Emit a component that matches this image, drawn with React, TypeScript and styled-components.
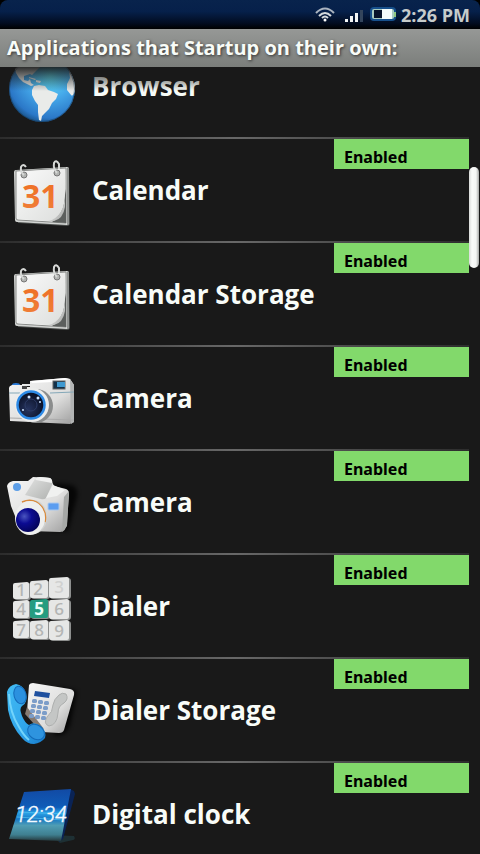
import React from "react";
import styled, { createGlobalStyle } from "styled-components";

const GlobalStyle = createGlobalStyle`
  * { box-sizing: border-box; }
  body { margin: 0; background: #000; }
`;

const sans = `"Open Sans", "Noto Sans", sans-serif`;

const Screen = styled.div`
  display: flex;
  flex-direction: column;
  height: 100vh;
  overflow: hidden;
  background: #191919;
  color: #f8fcf8;
  font-family: ${sans};
  font-weight: 700;
`;

const StatusWrap = styled.div`
  flex: none;
  background: #000;
`;

const StatusBar = styled.div`
  display: flex;
  align-items: center;
  justify-content: flex-end;
  height: 29px;
  padding-right: 10px;
  border-radius: 8px 8px 0 0;
  background: linear-gradient(#08234c 0%, #06204a 40%, #020c20 80%, #000 100%);
`;

const StatusIcons = styled.svg`
  width: 84px;
  height: 29px;
  margin-right: 4px;
`;

const Clock = styled.time`
  font-size: 18px;
  line-height: 28px;
  color: #c6cbcb;
  white-space: nowrap;
`;

const TitleBar = styled.h1`
  flex: none;
  margin: 0;
  height: 38px;
  padding-left: 7px;
  font-size: 20px;
  line-height: 38px;
  white-space: nowrap;
  background: linear-gradient(#969896, #7b7e7b);
  text-shadow: 1px 1px 3px #333;
`;

const Viewport = styled.main`
  position: relative;
  display: flex;
  flex: 1;
  min-height: 0;
  overflow: hidden;
`;

const TopFade = styled.div`
  position: absolute;
  inset: 0 0 auto 0;
  height: 24px;
  background: linear-gradient(rgba(25, 25, 25, 0.9), rgba(25, 25, 25, 0));
`;

const List = styled.ul`
  flex: 1;
  margin: -32px 0 0;
  padding: 0;
  list-style: none;
`;

const Row = styled.li`
  display: grid;
  grid-template-columns: 92px 1fr 135px;
  align-items: center;
  height: 104px;
  border-bottom: 2px solid;
  border-image: linear-gradient(90deg, #2c2c2c, #686868 50%, #2c2c2c) 1;
`;

const Icon = styled.svg`
  width: 88px;
  height: 102px;
`;

const Name = styled.span`
  font-size: 26px;
  line-height: 36px;
  white-space: nowrap;
`;

const Badge = styled.span`
  align-self: start;
  height: 30px;
  padding: 6px 0 0 10px;
  font-family: "Noto Sans", sans-serif;
  font-size: 16px;
  line-height: 24px;
  color: #000;
  background: #82d96b;
`;

const Gutter = styled.div`
  flex: none;
  width: 11px;
  padding-top: 100px;
`;

const Thumb = styled.div`
  width: 10px;
  height: 101px;
  border-radius: 5px;
  background: linear-gradient(90deg, #d8dad8, #fafcfa 30%, #f4f6f4 70%, #a8aaa8);
`;

const Gradients = () => (
  <defs>
    <linearGradient id="metal" x1="0" y1="0" x2="1" y2="1">
      <stop offset="0" stopColor="#f6f6f6" />
      <stop offset="0.6" stopColor="#dededd" />
      <stop offset="1" stopColor="#9d9d9d" />
    </linearGradient>
    <radialGradient id="ocean" cx="0.62" cy="0.3" r="0.75">
      <stop offset="0" stopColor="#62e2f6" />
      <stop offset="0.45" stopColor="#45a9ea" />
      <stop offset="0.85" stopColor="#2b78c8" />
      <stop offset="1" stopColor="#174e80" />
    </radialGradient>
    <linearGradient id="paper" x1="0" y1="0" x2="1" y2="1">
      <stop offset="0" stopColor="#fafafa" />
      <stop offset="1" stopColor="#dcdedc" />
    </linearGradient>
    <linearGradient id="curl" x1="0" y1="0" x2="1" y2="1">
      <stop offset="0" stopColor="#f4f5f4" />
      <stop offset="1" stopColor="#a8aaa8" />
    </linearGradient>
    <linearGradient id="orange" x1="0" y1="0" x2="0" y2="1">
      <stop offset="0" stopColor="#ee6c20" />
      <stop offset="1" stopColor="#f0813c" />
    </linearGradient>
    <radialGradient id="lens" cx="0.4" cy="0.65" r="0.65">
      <stop offset="0" stopColor="#26345f" />
      <stop offset="1" stopColor="#070d20" />
    </radialGradient>
    <radialGradient id="lensBlue" cx="0.35" cy="0.35" r="0.75">
      <stop offset="0" stopColor="#4a55c0" />
      <stop offset="0.4" stopColor="#0b0b92" />
      <stop offset="1" stopColor="#020250" />
    </radialGradient>
    <linearGradient id="prism" x1="0" y1="0" x2="1" y2="1">
      <stop offset="0" stopColor="#e4e5e4" />
      <stop offset="1" stopColor="#b0b2b0" />
    </linearGradient>
    <linearGradient id="handset" x1="0" y1="0" x2="1" y2="1">
      <stop offset="0" stopColor="#43bcf4" />
      <stop offset="0.6" stopColor="#2fa4ea" />
      <stop offset="1" stopColor="#1678c8" />
    </linearGradient>
    <linearGradient id="sea" x1="0" y1="0" x2="0" y2="1">
      <stop offset="0" stopColor="#124aa4" />
      <stop offset="0.35" stopColor="#0f5cb8" />
      <stop offset="0.46" stopColor="#2aa2e6" />
      <stop offset="0.58" stopColor="#1878c4" />
      <stop offset="0.7" stopColor="#4f9db4" />
      <stop offset="0.88" stopColor="#3f7f90" />
      <stop offset="1" stopColor="#25383c" />
    </linearGradient>
    <filter id="soft" x="-30%" y="-30%" width="160%" height="160%">
      <feGaussianBlur stdDeviation="2" />
    </filter>
  </defs>
);

const Globe = () => (
  <>
    <circle cx="42" cy="54" r="33" fill="url(#ocean)" />
    <g fill="#e9ebe9">
      <path d="M15 34 L24 26 L42 22 L50 27 L41 31 L37 35 L32 40 L30 39 L27 40 L24 41 L24 45 L28 46 L30 44 L31 48 L34 50 L31 51 L27 49 L23 47 L19 43 L16 38Z" />
      <path d="M29 42 L36 44 L35 45 L29 43Z M36 45 L41 46 L40 48 L36 47Z" />
      <path d="M34 51 L39 50 L45 51 L48 55 L54 57 L58 59 L56 64 L52 68 L49 74 L45 78 L42 81 L41 86 L39 85 L38 77 L38 70 L35 66 L32 60 L32 55Z" />
      <path d="M69 35 Q76 46 75 56 Q73 62 71 60 L67 55 L67 49 L70 43Z" />
    </g>
    <circle cx="42" cy="54" r="32.5" fill="none" stroke="#14334f" opacity="0.5" />
  </>
);

const Calendar = () => (
  <>
    <path d="M18 32 L69 29 L70 84 Q70 87 67 87 L18 84Z" fill="#4c4f4d" />
    <path d="M16 31 L67 28 Q69 28 69 30 L69 84 Q69 86 67 86 L17 83 Q15 83 15 81 L14 33 Q14 31 16 31Z" fill="#d3d5d3" />
    <path d="M67 29 Q69 28 69 30 L69 84 Q69 86 67 86Z" fill="#8d908e" />
    <path d="M16 32 L66 29 L66 84 L18 81 Q16 81 16 79Z" fill="#f0f1f0" stroke="#898b89" />
    <path d="M66 50 L66 84 L52 83 Q62 78 66 50Z" fill="#5c5f5d" />
    <path d="M17 33 L65 30 Q66 60 63 69 Q59 80 48 82 L18 80Z" fill="url(#paper)" />
    <path d="M65 54 Q65 78 48 82 L54 82 Q63 80 65 68Z" fill="url(#curl)" />
    <g fill="#b2b4b2" stroke="#777" strokeWidth="1">
      <circle cx="24" cy="36" r="3" />
      <circle cx="57" cy="34" r="3" />
    </g>
    <path d="M24 36 Q20 33 21 28 Q23 24 26 28 M57 34 Q53 30 54 24 Q56 20 59 25 L59 30" fill="none" stroke="#d6d8d6" strokeWidth="2" />
    <text x="22" y="69" fill="url(#orange)" fontFamily="Noto Sans, sans-serif" fontWeight="700" fontSize="32">
      31
    </text>
  </>
);

const Camera = () => (
  <>
    <ellipse cx="16" cy="38" rx="4" ry="2" fill="#2b7bd8" />
    <path d="M9 41 Q9 39 12 38 L22 38 L22 40 L30 40 L30 34 L65 31 L70 32 L74 38 L74 75 L70 77 L10 74Z" fill="url(#metal)" />
    <path d="M70 32 L74 38 L74 75 L71 77Z" fill="#b2b4b4" />
    <path d="M31 34 L65 31 L70 32 L53 35 L32 36Z" fill="#fff" />
    <path d="M22 39 L27 39 L27 42 L22 42Z" fill="#444" />
    <path d="M22 37 H30 V39 H22Z" fill="#e8e9e8" />
    <path d="M9 46 H20 M50 46 L74 45" stroke="#84a8b8" strokeWidth="1" />
    <path d="M10 71 L74 73" stroke="#aaa" />
    <rect x="53" y="34" width="12" height="8" fill="#143149" stroke="#666" />
    <path d="M57 35 H65 V40 H57Z" fill="#3f99d0" />
    <ellipse cx="36" cy="59" rx="17" ry="17" fill="#8b8d8d" />
    <circle cx="32" cy="58" r="17" fill="#ecedec" />
    <circle cx="31" cy="58" r="13.5" fill="url(#lens)" stroke="#2d8ae6" strokeWidth="2.5" />
    <circle cx="31" cy="58" r="6" fill="none" stroke="#2d3c66" />
    <g fill="#cfe4ff">
      <circle cx="29" cy="50" r="1.5" />
      <circle cx="38" cy="51" r="1.5" />
      <circle cx="23" cy="63" r="1" />
      <circle cx="40" cy="55" r="1" />
    </g>
  </>
);

const CompactCamera = () => (
  <>
    <path d="M54 32 L72 34 Q80 38 76 50 L68 80 L50 80Z" fill="#000" opacity="0.75" filter="url(#soft)" />
    <path d="M7 35 Q8 31 13 30 L28 30 L33 26 L50 27 L54 35 L66 38 Q69 39 69 43 L67 72 Q66 81 60 81 L30 80 L17 70 L11 55Z" fill="url(#metal)" />
    <path d="M64 46 L69 40 L67 75 L62 81Z" fill="#a6a8a6" />
    <path d="M25 44 L35 28 Q37 26 40 26 L50 27 Q53 29 52 34 L46 47 Q44 49 41 48Z" fill="url(#prism)" />
    <path d="M35 28 Q37 26 40 26 L50 27 Q53 29 52 32 L36 29Z" fill="#f0f1f0" />
    <path d="M46 47 L53 34 L65 39 L57 45Z" fill="#f0f1f0" />
    <circle cx="17" cy="36" r="4" fill="#5c9ee8" />
    <rect x="48" y="52" width="11" height="7" rx="1" fill="#5b9df0" stroke="#aac8ee" />
    <ellipse cx="33" cy="66" rx="14" ry="17" fill="#d0d2d0" />
    <path d="M22 51 Q34 46 42 56 Q47 63 45 71" fill="none" stroke="#d98a3c" strokeWidth="1.5" />
    <ellipse cx="30" cy="67" rx="15" ry="17" fill="#eeefee" />
    <ellipse cx="28" cy="69" rx="12" ry="12" fill="url(#lensBlue)" />
  </>
);

const keys = [
  { x: 13, y: 27, w: 16, h: 17, d: "1", tx: 21, ty: 41 },
  { x: 30, y: 25, w: 18, h: 18, d: "2", tx: 38, ty: 40 },
  { x: 49, y: 22, w: 20, h: 21, d: "3", tx: 59, ty: 38 },
  { x: 13, y: 45, w: 16, h: 18, d: "4", tx: 21, ty: 60 },
  { x: 30, y: 44, w: 18, h: 19, d: "5", tx: 39, ty: 60 },
  { x: 49, y: 44, w: 20, h: 20, d: "6", tx: 59, ty: 60 },
  { x: 13, y: 65, w: 16, h: 18, d: "7", tx: 21, ty: 81 },
  { x: 30, y: 65, w: 18, h: 19, d: "8", tx: 39, ty: 81 },
  { x: 49, y: 65, w: 20, h: 20, d: "9", tx: 59, ty: 82 },
];

const Dialer = () => (
  <g fontFamily="Noto Sans, sans-serif" fontSize="17" textAnchor="middle">
    {keys.map((k) => (
      <g key={k.d}>
        <rect x={k.x + 1} y={k.y + 1} width={k.w + 1} height={k.h} rx="3" fill="#8d8f8e" />
        <path
          d={`M${k.x + 2} ${k.y + 1} L${k.x + k.w - 2} ${k.y} Q${k.x + k.w} ${k.y} ${k.x + k.w} ${k.y + 2} V${k.y + k.h - 2} Q${k.x + k.w} ${k.y + k.h} ${k.x + k.w - 2} ${k.y + k.h} H${k.x + 2} Q${k.x} ${k.y + k.h} ${k.x} ${k.y + k.h - 2} V${k.y + 3} Q${k.x} ${k.y + 1} ${k.x + 2} ${k.y + 1}Z`}
          fill={k.d === "5" ? "#259c80" : "#e6e7e6"}
        />
        <text
          x={k.tx}
          y={k.ty}
          fontWeight={k.d === "5" ? 700 : 500}
          fill={k.d === "5" ? "#e8fff8" : k.d === "3" ? "#d0d1d0" : "#b3b5b4"}
        >
          {k.d}
        </text>
      </g>
    ))}
  </g>
);

const Phone = () => (
  <>
    <path d="M60 28 L77 32 L70 66 Q66 78 54 76Z" fill="#000" opacity="0.8" filter="url(#soft)" />
    <path d="M29 26 Q30 24 33 24 L70 30 Q75 31 74 36 L64 71 Q63 74 59 74 L42 73 L27 53Z" fill="url(#metal)" />
    <path d="M27 48 L44 70 L35 66 L25 55Z" fill="#867b72" />
    <path d="M35 32 L50 34 L49 39 L34 37Z" fill="#1e509f" />
    <path d="M59 36 Q62 33 66 35 Q69 40 64 44 Q58 47 58 54 Q57 66 49 67 Q43 65 47 58 Q53 53 53 46 Q54 40 59 36Z" fill="#c4c6c5" stroke="#adafae" />
    <g fill="#7c9dc8">
      {[0, 1, 2, 3].map((r) =>
        [0, 1, 2].map((c) => (
          <rect key={`${r}${c}`} x={32 + c * 6 - r} y={40 + c + r * 5} width="5" height="4" rx="1.5" />
        ))
      )}
    </g>
    <path d="M7 33 Q9 26 16 25 Q23 26 26 34 Q28 44 22 47 Q19 49 22 57 Q25 64 29 66 Q34 62 41 67 Q47 73 45 79 Q41 84 34 85 Q27 85 22 79 Q11 67 8 51Z" fill="url(#handset)" />
    <path d="M9 35 Q10 54 19 68 Q24 77 29 81" fill="none" stroke="#72d4fb" strokeWidth="2" />
    <ellipse cx="20" cy="36" rx="6" ry="9" fill="#2b91df" stroke="#146bb9" transform="rotate(-14 20 36)" />
    <ellipse cx="36" cy="73" rx="9" ry="7" fill="#2e94df" stroke="#146bb9" transform="rotate(35 36 73)" />
  </>
);

const DigitalClock = () => (
  <>
    <path d="M52 72 L74 73 Q76 76 73 77 L60 80Z" fill="#1e3034" />
    <path d="M70 26 L74 28 L75 31 L63 76 L59 79Z" fill="#0a2355" />
    <path d="M24 29 L71 26 L61 78 L9 76Z" fill="url(#sea)" />
    <path d="M19 49 L66 51 M17 54 L64 57" stroke="#53c5f2" strokeWidth="1" opacity="0.7" />
    <text x="15" y="59" fill="#f5fbff" stroke="#f5fbff" strokeWidth="0.4" fontFamily="Roboto, sans-serif" fontSize="22" fontWeight="300" fontStyle="italic">
      12:34
    </text>
  </>
);

const apps = [
  { name: "Browser", Art: Globe, status: null },
  { name: "Calendar", Art: Calendar, status: "Enabled" },
  { name: "Calendar Storage", Art: Calendar, status: "Enabled" },
  { name: "Camera", Art: Camera, status: "Enabled" },
  { name: "Camera", Art: CompactCamera, status: "Enabled" },
  { name: "Dialer", Art: Dialer, status: "Enabled" },
  { name: "Dialer Storage", Art: Phone, status: "Enabled" },
  { name: "Digital clock", Art: DigitalClock, status: "Enabled" },
];

export default function App() {
  return (
    <Screen>
      <GlobalStyle />
      <StatusWrap>
        <StatusBar>
          <StatusIcons viewBox="0 0 84 29" aria-hidden="true">
            <g fill="none" stroke="#d5dadd" strokeWidth="2">
              <path d="M3 13 Q12 4 21 13" opacity="0.8" />
              <path d="M6 16 Q12 10 18 16" />
              <path d="M9 18 Q12 15 15 18" />
            </g>
            <circle cx="12" cy="20" r="1.5" fill="#fff" />
            <path d="M32 19h3v3h-3z M37 16h3v6h-3z M42 13h3v9h-3z" fill="#f2f5f5" />
            <path d="M47 10h3v12h-3z" fill="#34455c" />
            <rect x="57" y="7" width="26" height="14" rx="4" fill="#17508c" />
            <rect x="59" y="9" width="22" height="10" rx="2" fill="#a8ccc0" />
            <rect x="81" y="12" width="2" height="5" fill="#8fc880" />
            <rect x="61" y="10" width="8" height="8" fill="#07142a" />
            <rect x="69" y="9" width="10" height="10" fill="#f3fbfb" />
          </StatusIcons>
          <Clock>2:26 PM</Clock>
        </StatusBar>
      </StatusWrap>
      <TitleBar>Applications that Startup on their own:</TitleBar>
      <Viewport>
        <List>
          {apps.map(({ name, Art, status }, i) => (
            <Row key={i}>
              <Icon viewBox="0 0 88 102" aria-hidden="true">
                {i === 0 && <Gradients />}
                <Art />
              </Icon>
              <Name>{name}</Name>
              {status && <Badge>{status}</Badge>}
            </Row>
          ))}
        </List>
        <Gutter>
          <Thumb />
        </Gutter>
        <TopFade />
      </Viewport>
    </Screen>
  );
}
